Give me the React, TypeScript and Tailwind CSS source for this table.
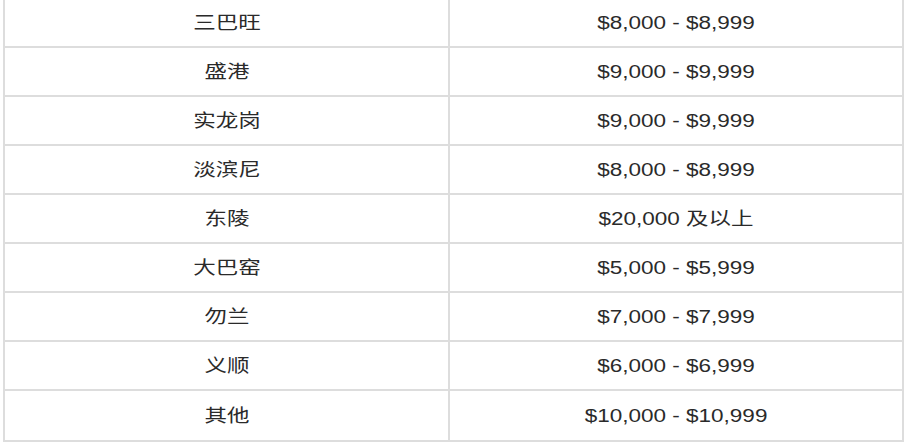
const rows: [string, string][] = [
  ["三巴旺", "$8,000 - $8,999"],
  ["盛港", "$9,000 - $9,999"],
  ["实龙岗", "$9,000 - $9,999"],
  ["淡滨尼", "$8,000 - $8,999"],
  ["东陵", "$20,000 及以上"],
  ["大巴窑", "$5,000 - $5,999"],
  ["勿兰", "$7,000 - $7,999"],
  ["义顺", "$6,000 - $6,999"],
  ["其他", "$10,000 - $10,999"],
];

function Cell({ text, className = "" }: { text: string; className?: string }) {
  return (
    <div className={`flex items-center justify-center ${className}`}>
      <span className="inline-block scale-x-[1.25] text-[18px] leading-none text-[#2a2a2a]">
        {text}
      </span>
    </div>
  );
}

export default function App() {
  return (
    <div
      className="w-[906px] h-[446px] overflow-hidden bg-white"
      style={{ fontFamily: '"Liberation Sans", "Noto Sans CJK SC", sans-serif' }}
    >
      <div className="ml-[3px] -mt-[3px] w-[901px] border-2 border-[#dddddd] divide-y-2 divide-[#dddddd]">
        {rows.map(([area, price]) => (
          <div key={area} className="grid grid-cols-[445px_1fr] h-[49px]">
            <Cell text={area} className="border-r-2 border-[#dddddd]" />
            <Cell text={price} />
          </div>
        ))}
      </div>
    </div>
  );
}
